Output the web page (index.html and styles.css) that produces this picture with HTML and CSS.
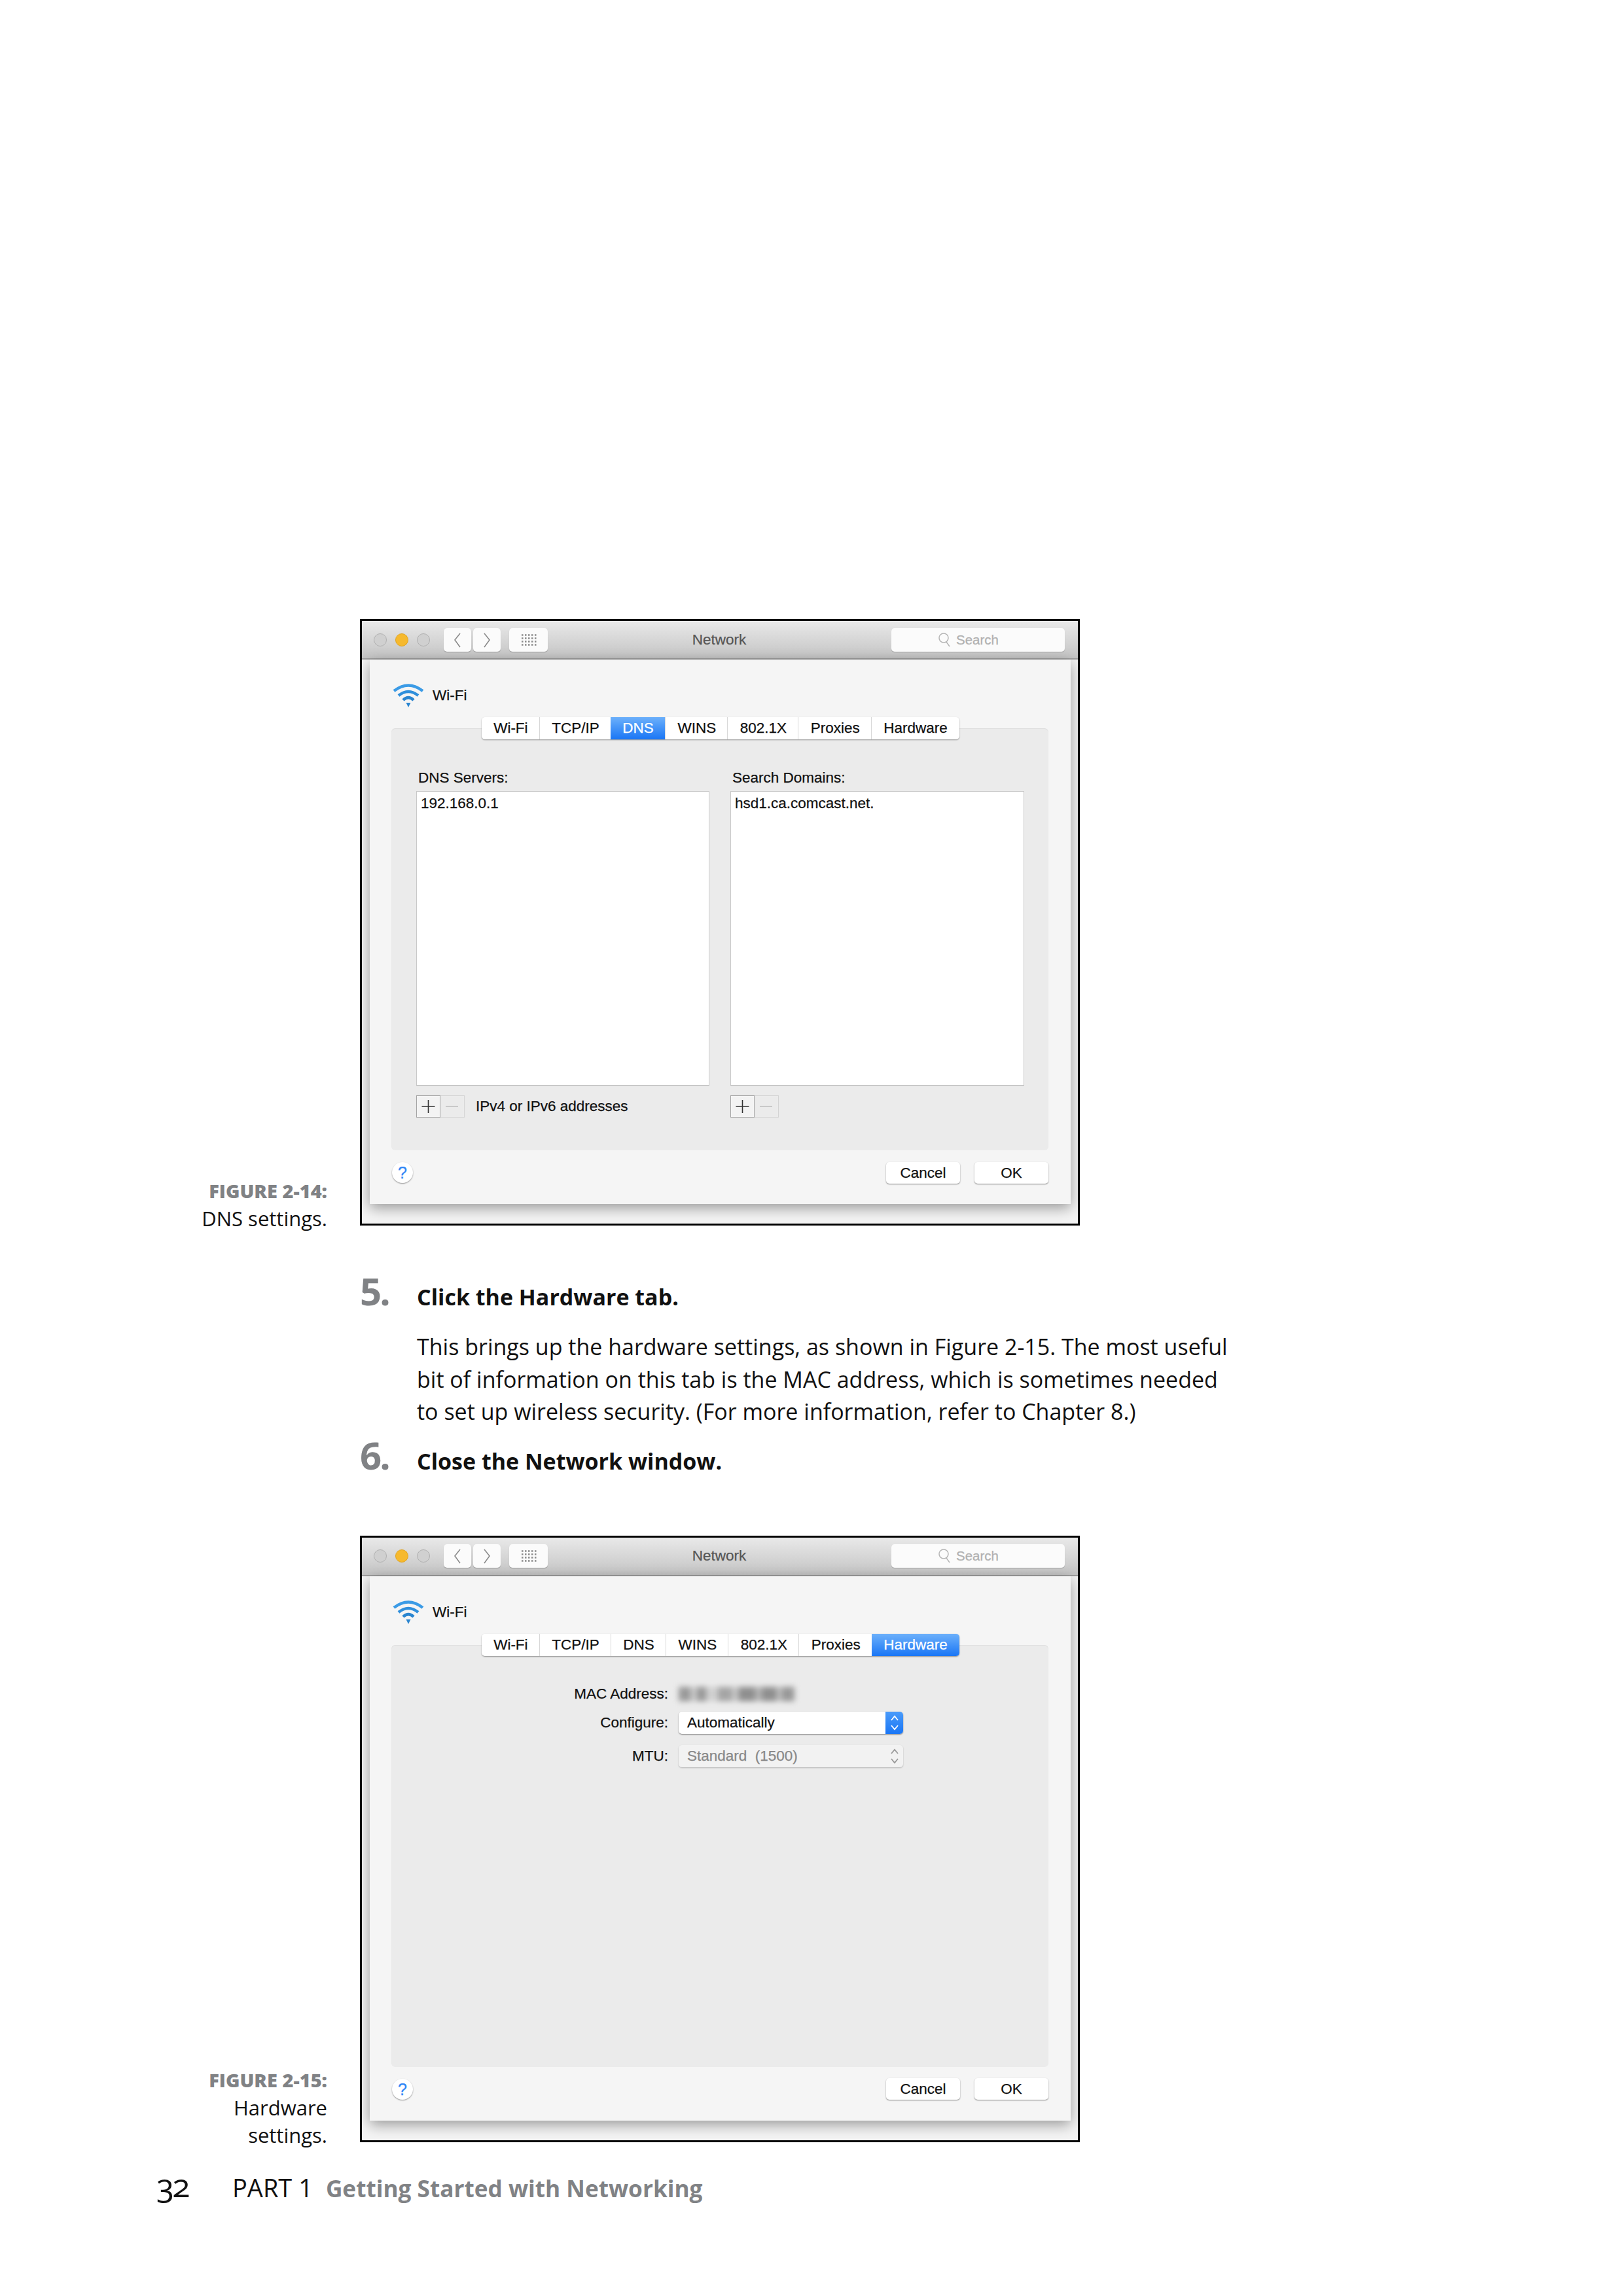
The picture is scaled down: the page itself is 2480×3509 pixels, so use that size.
FILE: index.html
```html
<!DOCTYPE html>
<html lang="en">
<head>
  <meta charset="UTF-8" />
  <title>Getting Started with Networking - page 32</title>
  <link rel="stylesheet" href="styles.css">
</head>
<body>
  <svg class="sprite" width="0" height="0">
    <symbol id="wifi" viewBox="0 0 48 36">
      <path d="M2 11 Q24 -6 46 11" fill="none" stroke="#3b9be6" stroke-width="4.5"/>
      <path d="M9 18 Q24 6 39 18" fill="none" stroke="#2f8fdc" stroke-width="4.5"/>
      <path d="M16 25 Q24 17 32 25" fill="none" stroke="#2a85d0" stroke-width="4.5"/>
      <path d="M20.5 29 H27.5 L24 36 Z" fill="#2a85d0"/>
    </symbol>
    <symbol id="back" viewBox="0 0 42 36">
      <path d="M25 8 L17 18 L25 29" fill="none" stroke="#8a8a8a" stroke-width="1.6"/>
    </symbol>
    <symbol id="forward" viewBox="0 0 42 36">
      <path d="M17 8 L25 18 L17 29" fill="none" stroke="#8a8a8a" stroke-width="1.6"/>
    </symbol>
    <symbol id="grid" viewBox="0 0 59 36">
      <path d="M19 10.500 H42 M19 15.500 H42 M19 20.500 H42 M19 25.500 H42" fill="none" stroke="#8a8a8a" stroke-width="2.5" stroke-dasharray="2.500 2.500"/>
    </symbol>
    <symbol id="lens" viewBox="0 0 20 24">
      <circle cx="9" cy="9" r="7" fill="none" stroke="#b5b5b5" stroke-width="1.5"/>
      <path d="M13 15 L18 22" fill="none" stroke="#b5b5b5" stroke-width="1.5"/>
    </symbol>
    <symbol id="updown" viewBox="0 0 14 24">
      <path d="M2 8 L7 2 L12 8 M2 16 L7 22 L12 16" fill="none" stroke="currentColor" stroke-width="1.8"/>
    </symbol>
    <symbol id="plus" viewBox="0 0 37 34">
      <path d="M18.500 7 V27 M8.500 17 H28.500" fill="none" stroke="#333" stroke-width="1.6"/>
    </symbol>
    <symbol id="minus" viewBox="0 0 37 34">
      <path d="M8 17 H27" fill="none" stroke="#c4c4c4" stroke-width="1.8"/>
    </symbol>
  </svg>

  <div class="page">

    <div class="figure-row">
      <p class="caption"><b>FIGURE 2-14:</b><br>DNS settings.</p>
      <div class="window">
        <div class="titlebar">
          <div class="title-left">
            <span class="light"></span><span class="light amber"></span><span class="light"></span>
            <span class="nav-btn back"><svg width="42" height="36"><use href="#back"/></svg></span>
            <span class="nav-btn forward"><svg width="42" height="36"><use href="#forward"/></svg></span>
            <span class="nav-btn grid"><svg width="59" height="36"><use href="#grid"/></svg></span>
          </div>
          <div class="title-text">Network</div>
          <div class="title-right">
            <div class="search"><svg width="20" height="24"><use href="#lens"/></svg>Search</div>
          </div>
        </div>
        <div class="panel">
          <div class="panel-head"><svg width="48" height="36"><use href="#wifi"/></svg>Wi-Fi</div>
          <div class="tab-box">
            <div class="tabs">
              <span class="tab">Wi-Fi</span><span class="tab">TCP/IP</span><span class="tab active">DNS</span><span class="tab">WINS</span><span class="tab">802.1X</span><span class="tab">Proxies</span><span class="tab">Hardware</span>
            </div>
            <div class="dns-cols">
              <div>
                <div class="col-label">DNS Servers:</div>
                <div class="listbox">192.168.0.1</div>
                <div class="list-tools">
                  <div class="plusminus">
                    <span class="plus"><svg width="37" height="34"><use href="#plus"/></svg></span>
                    <span class="minus"><svg width="37" height="34"><use href="#minus"/></svg></span>
                  </div>
                  <span class="hint">IPv4 or IPv6 addresses</span>
                </div>
              </div>
              <div>
                <div class="col-label">Search Domains:</div>
                <div class="listbox">hsd1.ca.comcast.net.</div>
                <div class="list-tools">
                  <div class="plusminus">
                    <span class="plus"><svg width="37" height="34"><use href="#plus"/></svg></span>
                    <span class="minus"><svg width="37" height="34"><use href="#minus"/></svg></span>
                  </div>
                </div>
              </div>
            </div>
          </div>
          <div class="panel-foot">
            <span class="help">?</span>
            <div class="foot-btns"><span class="btn">Cancel</span><span class="btn">OK</span></div>
          </div>
        </div>
      </div>
    </div>

    <div class="step first-step"><span class="num">5.</span><span class="step-text">Click the Hardware tab.</span></div>
    <p class="para">This brings up the hardware settings, as shown in Figure 2-15. The most useful<br>bit of information on this tab is the MAC address, which is sometimes needed<br>to set up wireless security. (For more information, refer to Chapter 8.)</p>
    <div class="step"><span class="num">6.</span><span class="step-text">Close the Network window.</span></div>

    <div class="figure-row second-figure">
      <p class="caption"><b>FIGURE 2-15:</b><br>Hardware<br>settings.</p>
      <div class="window">
        <div class="titlebar">
          <div class="title-left">
            <span class="light"></span><span class="light amber"></span><span class="light"></span>
            <span class="nav-btn back"><svg width="42" height="36"><use href="#back"/></svg></span>
            <span class="nav-btn forward"><svg width="42" height="36"><use href="#forward"/></svg></span>
            <span class="nav-btn grid"><svg width="59" height="36"><use href="#grid"/></svg></span>
          </div>
          <div class="title-text">Network</div>
          <div class="title-right">
            <div class="search"><svg width="20" height="24"><use href="#lens"/></svg>Search</div>
          </div>
        </div>
        <div class="panel">
          <div class="panel-head"><svg width="48" height="36"><use href="#wifi"/></svg>Wi-Fi</div>
          <div class="tab-box">
            <div class="tabs">
              <span class="tab">Wi-Fi</span><span class="tab">TCP/IP</span><span class="tab">DNS</span><span class="tab">WINS</span><span class="tab">802.1X</span><span class="tab">Proxies</span><span class="tab active">Hardware</span>
            </div>
            <div class="hw-form">
              <span class="hw-label">MAC Address:</span>
              <span class="mac-blur"></span>
              <span class="hw-label">Configure:</span>
              <div class="select">Automatically<span class="select-arrows"><svg width="14" height="24"><use href="#updown"/></svg></span></div>
              <span class="hw-label">MTU:</span>
              <div class="select disabled">Standard &nbsp;(1500)<span class="select-arrows"><svg width="14" height="24"><use href="#updown"/></svg></span></div>
            </div>
          </div>
          <div class="panel-foot">
            <span class="help">?</span>
            <div class="foot-btns"><span class="btn">Cancel</span><span class="btn">OK</span></div>
          </div>
        </div>
      </div>
    </div>

    <div class="footer">
      <span class="page-no">32</span>
      <span class="part">PART 1</span>
      <span class="chapter">Getting Started with Networking</span>
    </div>

  </div>
</body>
</html>
```

FILE: styles.css
```css
body {
  margin: 0;
  background: #fff;
  color: #111;
  font-family: "Open Sans", "Noto Sans", sans-serif;
}

.sprite {
  position: absolute;
}

.page {
  padding-top: 946px;
}

.figure-row {
  display: flex;
  align-items: flex-end;
}

.second-figure {
  margin-top: 89px;
}

.caption {
  width: 500px;
  margin: 0 50px -10px 0;
  text-align: right;
  font-size: 31px;
  line-height: 42px;
}

.caption b {
  color: #808285;
  font-size: 29px;
  font-weight: 800;
}

/* mac window */
.window {
  box-sizing: border-box;
  width: 1100px;
  height: 927px;
  border: 3px solid #000;
  background: #f4f4f4;
  overflow: hidden;
  font-family: "Liberation Sans", Arial, sans-serif;
  font-size: 22.5px;
  color: #111;
  -webkit-text-stroke: .25px;
}

.titlebar {
  box-sizing: border-box;
  height: 59px;
  display: grid;
  grid-template-columns: 1fr auto 1fr;
  align-items: center;
  padding: 0 20px 0 18px;
  background: linear-gradient(#e9e9e9, #c4c4c4);
  border-bottom: 2px solid #9d9d9d;
}

.title-left {
  display: flex;
  align-items: center;
}

.light {
  width: 20px;
  height: 20px;
  margin-right: 13px;
  border-radius: 50%;
  background: #d0d0d0;
  border: 1px solid #b0b0b0;
  box-sizing: border-box;
}

.amber {
  background: #f6b92e;
  border-color: #e0a420;
}

.nav-btn {
  display: flex;
  height: 36px;
  background: #fbfbfb;
  border-radius: 5px;
  box-shadow: 0 1px 1px rgba(0, 0, 0, .25);
}

.back {
  margin-left: 8px;
}

.forward {
  margin-left: 3px;
}

.grid {
  margin-left: 13px;
}

.title-text {
  color: #555;
}

.title-right {
  display: flex;
  justify-content: flex-end;
}

.search {
  box-sizing: border-box;
  width: 265px;
  height: 36px;
  padding-left: 71px;
  display: flex;
  align-items: center;
  gap: 8px;
  background: #fbfbfb;
  border-radius: 5px;
  box-shadow: 0 1px 1px rgba(0, 0, 0, .2);
  color: #b0b0b0;
  font-size: 20.5px;
}

.panel {
  box-sizing: border-box;
  height: 832px;
  margin: 0 11px 0 12px;
  padding: 37px 34px 0 33px;
  display: flex;
  flex-direction: column;
  background: #f5f5f5;
  box-shadow: 0 6px 20px rgba(0, 0, 0, .38);
}

.panel-head {
  display: flex;
  align-items: center;
  gap: 13px;
  height: 36px;
  margin-left: 2px;
}

.tab-box {
  flex: 1;
  margin-top: 32px;
  background: #ebebeb;
  border-radius: 6px;
  box-shadow: inset 0 1px 1px rgba(0, 0, 0, .06);
}

.tabs {
  display: flex;
  justify-content: center;
  width: max-content;
  margin: -17px auto 0;
  position: relative;
  left: 1px;
  height: 34px;
  background: #fff;
  border-radius: 5px;
  box-shadow: 0 1px 2px rgba(0, 0, 0, .4);
}

.tab {
  padding: 0 18.300px;
  line-height: 34px;
  color: #111;
  border-left: 1px solid #d8d8d8;
  margin-left: -1px;
}

.tab:first-child {
  border-left: 0;
  margin-left: 0;
}

.tab:last-child.active {
  border-radius: 0 5px 5px 0;
}

.active {
  background: linear-gradient(#6cb0fb, #1a76f5);
  color: #fff;
  border-left: 0;
}

.dns-cols {
  display: grid;
  grid-template-columns: 448px 449px;
  gap: 32px;
  padding: 46px 37px 0 38px;
}

.col-label {
  height: 26px;
  line-height: 26px;
  margin: 0 0 7px 3px;
}

.listbox {
  box-sizing: border-box;
  height: 451px;
  padding: 5px 0 0 6px;
  background: #fff;
  border: 1px solid #c9c9c9;
  border-bottom-width: 2px;
}

.list-tools {
  display: flex;
  align-items: center;
  gap: 17px;
  margin-top: 14px;
}

.plusminus {
  display: flex;
  width: 74px;
  height: 34px;
  box-sizing: border-box;
  border: 1px solid #d4d4d4;
}

.plus {
  display: flex;
  justify-content: center;
  width: 37px;
  height: 34px;
  margin: -1px 0 0 -1px;
  background: #f3f3f3;
  box-sizing: border-box;
  border: 1px solid #a5a5a5;
}

.plus svg {
  flex: none;
  margin-top: -1px;
}

.minus {
  display: flex;
  flex: 1;
  justify-content: center;
  margin-top: -1px;
}

.minus svg {
  flex: none;
}

.hw-form {
  display: grid;
  grid-template-columns: 423px 343px;
  grid-template-rows: 40px 51px 34px;
  column-gap: 16px;
  padding-top: 45px;
}

.hw-label {
  text-align: right;
  line-height: 26px;
  white-space: nowrap;
}

.hw-label:nth-of-type(n+2) {
  line-height: 34px;
}

.mac-blur {
  width: 177px;
  height: 22px;
  margin-top: 2px;
  background: linear-gradient(90deg, #9a9a9a 0 10%, #c8c8c8 10% 16%, #999 16% 24%, #d0d0d0 24% 34%, #a5a5a5 34% 46%, #c4c4c4 46% 52%, #8f8f8f 52% 66%, #b5b5b5 66% 72%, #8f8f8f 72% 84%, #bbb 84% 89%, #999 89%);
  filter: blur(4px);
}

.select {
  box-sizing: border-box;
  height: 34px;
  padding-left: 13px;
  position: relative;
  line-height: 33px;
  background: #fff;
  border-radius: 5px;
  box-shadow: 0 1px 2px rgba(0, 0, 0, .45);
}

.select-arrows {
  position: absolute;
  top: 0;
  right: 0;
  bottom: 0;
  width: 27px;
  display: flex;
  align-items: center;
  justify-content: center;
  border-radius: 0 5px 5px 0;
  background: linear-gradient(#4a9bfa, #1a76f5);
  color: #fff;
}

.disabled {
  background: #f2f2f2;
  color: #888;
  box-shadow: 0 1px 2px rgba(0, 0, 0, .25);
}

.disabled .select-arrows {
  background: none;
  color: #999;
}

.panel-foot {
  display: flex;
  justify-content: space-between;
  align-items: center;
  height: 34px;
  margin: 17px 0 31px;
}

.help {
  width: 32px;
  height: 32px;
  margin-left: 1px;
  border-radius: 50%;
  background: #fff;
  box-shadow: 0 1px 2px rgba(0, 0, 0, .4);
  color: #2f86f6;
  font-size: 25px;
  text-align: center;
  line-height: 32px;
}

.foot-btns {
  display: flex;
  gap: 22px;
}

.btn {
  width: 113px;
  height: 33px;
  line-height: 33px;
  text-align: center;
  background: #fff;
  border-radius: 5px;
  box-shadow: 0 1px 2px rgba(0, 0, 0, .45);
}

/* steps */
.step {
  display: flex;
  align-items: baseline;
  margin: 16px 0 0 550px;
  line-height: 50px;
}

.first-step {
  margin-top: 75px;
}

.num {
  width: 87px;
  color: #808285;
  font-size: 58px;
  font-weight: 700;
  line-height: 50px;
  letter-spacing: -3px;
}

.step-text {
  font-size: 34px;
  font-weight: 700;
}

.para {
  margin: 27px 0 0 637px;
  font-size: 34px;
  line-height: 49.5px;
  white-space: nowrap;
}

.footer {
  display: flex;
  align-items: baseline;
  margin-top: 31px;
  padding-left: 239px;
  font-size: 38px;
}

.page-no {
  width: 116px;
  font-size: 50px;
  letter-spacing: -3px;
  font-variant-numeric: oldstyle-nums;
}

.part {
  margin-right: 20px;
}

.chapter {
  color: #808285;
  font-size: 35.200px;
  font-weight: 700;
}
```
